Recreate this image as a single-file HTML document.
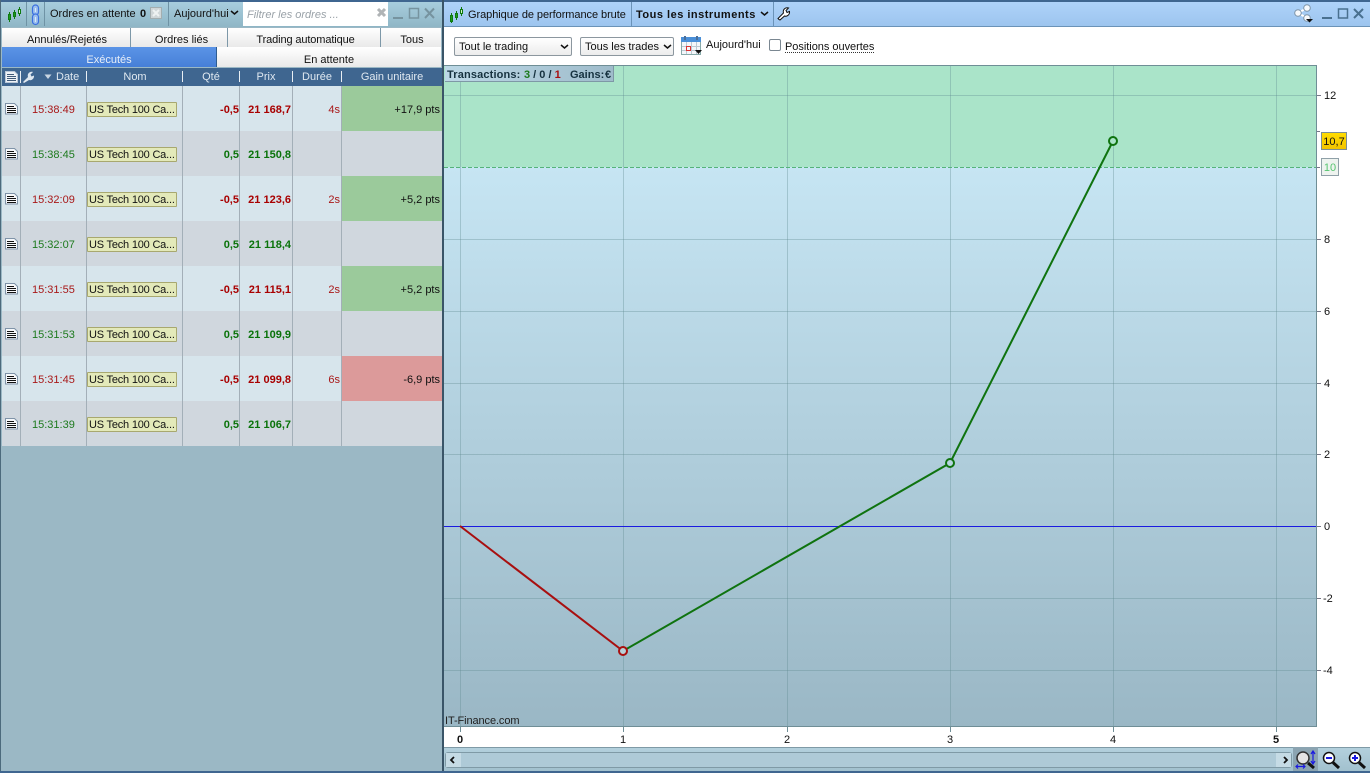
<!DOCTYPE html>
<html><head><meta charset="utf-8">
<style>
html,body{margin:0;padding:0}
body{width:1370px;height:773px;position:relative;overflow:hidden;background:#9bb8c5;font-family:"Liberation Sans",sans-serif;font-size:11px;color:#111}
.a{position:absolute;white-space:nowrap}
.box{position:absolute}
.tab{position:absolute;height:19px;line-height:24px;text-align:center;background:linear-gradient(#fff,#e9e9e9);font-size:11px;color:#111;border-right:1px solid #7d98a8;box-sizing:border-box}
.hd{position:absolute;top:68px;height:18px;line-height:19px;color:#dfe8f0;text-align:center;font-size:11px}
.sep{position:absolute;top:71px;width:1px;height:11px;background:#e8eef3}
.t{position:absolute;line-height:14px;height:14px;white-space:nowrap;margin-top:1px}
.tag{position:absolute;left:87px;width:87px;height:13px;line-height:14px;background:#e3e9b9;border:1px solid #a8a86f;border-radius:1px;font-size:11px;color:#111;padding-left:1px;white-space:nowrap;overflow:hidden;letter-spacing:-.2px}
.r{color:#a81818}.g{color:#1d7a1d}
.R{color:#a80000;font-weight:bold}.G{color:#0a730a;font-weight:bold}
.yl{position:absolute;left:1324px;font-size:11px;line-height:12px;color:#111;margin-top:1px}
.xl{position:absolute;top:734px;font-size:11px;line-height:13px;color:#111}
</style></head>
<body>
<!-- LEFT TOP BAR -->
<div class="box" style="left:0;top:0;width:442px;height:27px;background:linear-gradient(#a9cfdf,#8fb6c6)"></div>
<div class="box" style="left:0;top:0;width:444px;height:2px;background:#3f6690"></div>
<div class="box" style="left:26px;top:2px;width:1px;height:24px;background:#6f93a5"></div>
<div class="box" style="left:44px;top:2px;width:1px;height:24px;background:#6f93a5"></div>
<div class="box" style="left:168px;top:2px;width:1px;height:24px;background:#6f93a5"></div>
<svg class="box" style="left:0;top:0" width="46" height="27">
<g stroke="#0f7a0f" fill="#1d9a1d"><path d="M9.500 12v10M14.500 10v9M19.500 7v9"/><rect x="8.500" y="14.500" width="2" height="5"/><rect x="13.500" y="12.500" width="2" height="4"/></g>
<rect x="18.500" y="9.500" width="2" height="4" fill="#d8f0c8" stroke="#0f7a0f"/>
<g fill="#9cc0ee" stroke="#3a6fe0" stroke-width="1.200"><rect x="32.500" y="5" width="6" height="10" rx="3"/><rect x="32.500" y="14" width="6" height="10.500" rx="3"/></g>
<g fill="none" stroke="#dbe8f8" stroke-width="1"><path d="M35.500 8v4M35.500 17v5"/></g>
</svg>
<div class="a" style="left:50px;top:7px;line-height:14px;font-size:11px">Ordres en attente</div>
<div class="a" style="left:140px;top:7px;line-height:14px;font-size:11px;font-weight:bold">0</div>
<svg class="box" style="left:150px;top:7px" width="12" height="12"><rect x=".5" y=".5" width="11" height="11" fill="#cfd6d8" stroke="#a3aeb0"/><path d="M3 3l6 6M9 3l-6 6" stroke="#eef2f2" stroke-width="2"/></svg>
<div class="a" style="left:174px;top:7px;line-height:14px;font-size:11px">Aujourd'hui</div>
<svg class="box" style="left:230px;top:10px" width="9" height="6"><path d="M1 1l3.500 3L8 1" fill="none" stroke="#111" stroke-width="1.500"/></svg>
<div class="box" style="left:243px;top:2px;width:145px;height:24px;background:#fff"></div>
<div class="a" style="left:247px;top:8px;line-height:14px;font-size:11px;font-style:italic;color:#9aa2a8">Filtrer les ordres ...</div>
<svg class="box" style="left:376px;top:7px" width="12" height="12"><path d="M2 2l7 7M9 2l-7 7" stroke="#b0b4b6" stroke-width="3"/></svg>
<svg class="box" style="left:389px;top:5px" width="50" height="18">
<path d="M4 13h10" stroke="#76939f" stroke-width="2"/>
<rect x="20.500" y="3.500" width="9" height="9.500" fill="none" stroke="#76939f" stroke-width="1.500"/>
<path d="M36 3.500l9 9.500M45 3.500l-9 9.500" stroke="#76939f" stroke-width="2"/>
</svg>
<!-- TABS -->
<div class="box" style="left:0;top:27px;width:442px;height:41px;background:#9bb8c5"></div>
<div class="tab" style="left:2px;top:28px;width:129px;padding-left:2px">Annulés/Rejetés</div>
<div class="tab" style="left:131px;top:28px;width:97px;padding-left:5px">Ordres liés</div>
<div class="tab" style="left:228px;top:28px;width:153px;padding-left:3px;letter-spacing:-.12px">Trading automatique</div>
<div class="tab" style="left:381px;top:28px;width:60px;border-right:0;padding-left:2px">Tous</div>
<div class="tab" style="left:2px;top:47px;width:214px;height:20px;line-height:26px;background:linear-gradient(#5b94e6,#467fd8);color:#e8eff8;border:0">Exécutés</div>
<div class="tab" style="left:216px;top:47px;width:225px;height:20px;line-height:26px;border:0;border-left:1px solid #2e5c90">En attente</div>
<!-- HEADER -->
<div class="box" style="left:2px;top:68px;width:440px;height:18px;background:#3f6690"></div>
<svg class="box" style="left:4px;top:70px" width="32" height="14">
<path d="M1.500 1.500h9l3 3v8h-12z" fill="#eef2f6" stroke="#b9c8d8"/><path d="M3 4.500h7M3 6.500h9M3 8.500h9M3 10.500h9" stroke="#3f5a78"/>
<path d="M16.500 1v12" stroke="#e8eef3"/>
<path d="M20 13l-1-1 5-5c-1-3 1.500-6 5-5l-2.500 2.500 1 2 2.500-1c.5 3-2.500 5.500-5 4.500z" fill="#dfe8f0"/>
</svg>
<svg class="box" style="left:44px;top:74px" width="9" height="6"><path d="M0.500 0.500h7l-3.500 4.500z" fill="#c9d6e2"/></svg>
<div class="hd" style="left:56px;width:22px">Date</div>
<div class="hd" style="left:87px;width:96px">Nom</div>
<div class="hd" style="left:183px;width:56px">Qté</div>
<div class="hd" style="left:240px;width:52px">Prix</div>
<div class="hd" style="left:293px;width:48px">Durée</div>
<div class="hd" style="left:342px;width:100px">Gain unitaire</div>
<div class="sep" style="left:86px"></div><div class="sep" style="left:182px"></div><div class="sep" style="left:239px"></div><div class="sep" style="left:292px"></div><div class="sep" style="left:341px"></div>
<!-- ROWS BG -->
<div class="box" style="left:2px;top:86px;width:440px;height:45px;background:#d7e5ec"></div>
<div class="box" style="left:2px;top:131px;width:440px;height:45px;background:#d0d7de"></div>
<div class="box" style="left:2px;top:176px;width:440px;height:45px;background:#d7e5ec"></div>
<div class="box" style="left:2px;top:221px;width:440px;height:45px;background:#d0d7de"></div>
<div class="box" style="left:2px;top:266px;width:440px;height:45px;background:#d7e5ec"></div>
<div class="box" style="left:2px;top:311px;width:440px;height:45px;background:#d0d7de"></div>
<div class="box" style="left:2px;top:356px;width:440px;height:45px;background:#d7e5ec"></div>
<div class="box" style="left:2px;top:401px;width:440px;height:45px;background:#d0d7de"></div>
<div class="box" style="left:342px;top:86px;width:100px;height:45px;background:#9bca9b"></div>
<div class="box" style="left:342px;top:176px;width:100px;height:45px;background:#9bca9b"></div>
<div class="box" style="left:342px;top:266px;width:100px;height:45px;background:#9bca9b"></div>
<div class="box" style="left:342px;top:356px;width:100px;height:45px;background:#dc9a9a"></div>
<div class="box" style="left:20px;top:86px;width:1px;height:360px;background:#a3afb8"></div>
<div class="box" style="left:86px;top:86px;width:1px;height:360px;background:#a3afb8"></div>
<div class="box" style="left:182px;top:86px;width:1px;height:360px;background:#a3afb8"></div>
<div class="box" style="left:239px;top:86px;width:1px;height:360px;background:#a3afb8"></div>
<div class="box" style="left:292px;top:86px;width:1px;height:360px;background:#a3afb8"></div>
<div class="box" style="left:341px;top:86px;width:1px;height:360px;background:#a3afb8"></div>
<!-- ROW CONTENT -->
<svg class="box" style="left:0;top:86px" width="20" height="360">
<defs><g id="d"><path d="M5.500 17.500h9l3 3v7.500h-12z" fill="#f7f9fb" stroke="#7f93a8"/><path d="M7 20.500h7M7 22.500h9M7 24.500h9M7 26.500h9" stroke="#111"/></g></defs>
<use href="#d"/><use href="#d" y="45"/><use href="#d" y="90"/><use href="#d" y="135"/><use href="#d" y="180"/><use href="#d" y="225"/><use href="#d" y="270"/><use href="#d" y="315"/>
</svg>

<div class="t r" style="left:32px;top:102px">15:38:49</div><div class="tag" style="top:102px">US Tech 100 Ca...</div><div class="t R" style="right:1131px;top:102px">-0,5</div><div class="t R" style="right:1079px;top:102px">21 168,7</div><div class="t r" style="right:1030px;top:102px">4s</div><div class="t" style="right:930px;top:102px">+17,9 pts</div>

<div class="t g" style="left:32px;top:147px">15:38:45</div><div class="tag" style="top:147px">US Tech 100 Ca...</div><div class="t G" style="right:1131px;top:147px">0,5</div><div class="t G" style="right:1079px;top:147px">21 150,8</div>

<div class="t r" style="left:32px;top:192px">15:32:09</div><div class="tag" style="top:192px">US Tech 100 Ca...</div><div class="t R" style="right:1131px;top:192px">-0,5</div><div class="t R" style="right:1079px;top:192px">21 123,6</div><div class="t r" style="right:1030px;top:192px">2s</div><div class="t" style="right:930px;top:192px">+5,2 pts</div>

<div class="t g" style="left:32px;top:237px">15:32:07</div><div class="tag" style="top:237px">US Tech 100 Ca...</div><div class="t G" style="right:1131px;top:237px">0,5</div><div class="t G" style="right:1079px;top:237px">21 118,4</div>

<div class="t r" style="left:32px;top:282px">15:31:55</div><div class="tag" style="top:282px">US Tech 100 Ca...</div><div class="t R" style="right:1131px;top:282px">-0,5</div><div class="t R" style="right:1079px;top:282px">21 115,1</div><div class="t r" style="right:1030px;top:282px">2s</div><div class="t" style="right:930px;top:282px">+5,2 pts</div>

<div class="t g" style="left:32px;top:327px">15:31:53</div><div class="tag" style="top:327px">US Tech 100 Ca...</div><div class="t G" style="right:1131px;top:327px">0,5</div><div class="t G" style="right:1079px;top:327px">21 109,9</div>

<div class="t r" style="left:32px;top:372px">15:31:45</div><div class="tag" style="top:372px">US Tech 100 Ca...</div><div class="t R" style="right:1131px;top:372px">-0,5</div><div class="t R" style="right:1079px;top:372px">21 099,8</div><div class="t r" style="right:1030px;top:372px">6s</div><div class="t" style="right:930px;top:372px">-6,9 pts</div>

<div class="t g" style="left:32px;top:417px">15:31:39</div><div class="tag" style="top:417px">US Tech 100 Ca...</div><div class="t G" style="right:1131px;top:417px">0,5</div><div class="t G" style="right:1079px;top:417px">21 106,7</div>

<!-- borders -->
<div class="box" style="left:0;top:0;width:1px;height:773px;background:#4c6a7c"></div>
<div class="box" style="left:442px;top:0;width:2px;height:773px;background:#3a5568"></div>
<div class="box" style="left:0;top:771px;width:1370px;height:2px;background:#3f6690"></div>

<!-- RIGHT TOP BAR -->
<div class="box" style="left:444px;top:0;width:926px;height:27px;background:linear-gradient(#b0d4fa,#9cc4ee)"></div>
<div class="box" style="left:444px;top:0;width:926px;height:2px;background:#3f6690"></div>
<div class="box" style="left:444px;top:26px;width:926px;height:1px;background:#6b93b8"></div>
<div class="box" style="left:631px;top:2px;width:1px;height:24px;background:#6b93b8"></div>
<div class="box" style="left:773px;top:2px;width:1px;height:24px;background:#6b93b8"></div>
<svg class="box" style="left:448px;top:3px" width="24" height="22">
<g stroke="#0f7a0f" fill="#1d9a1d"><path d="M3.500 10v10M8.500 8v9M13.500 4v9"/><rect x="2.500" y="12.500" width="2" height="6"/><rect x="7.500" y="10.500" width="2" height="4"/></g>
<rect x="12.500" y="6.500" width="2" height="4" fill="#d8f0c8" stroke="#0f7a0f"/>
</svg>
<div class="a" style="left:468px;top:8px;line-height:14px;font-size:11px;letter-spacing:-.06px">Graphique de performance brute</div>
<div class="a" style="left:636px;top:8px;line-height:14px;font-size:11px;font-weight:bold;letter-spacing:.5px">Tous les instruments</div>
<svg class="box" style="left:760px;top:11px" width="9" height="6"><path d="M1 1l3.500 3L8 1" fill="none" stroke="#111" stroke-width="1.500"/></svg>
<svg class="box" style="left:777px;top:6px" width="14" height="15"><path d="M2 13.500l-1-1 5.500-5.500c-1-3 1.500-6 5-5l-2.500 2.500 1 2 2.500-1c.5 3-2.500 5.500-5 4.500l-4.500 4z" fill="#fff" stroke="#111"/></svg>
<svg class="box" style="left:1292px;top:4px" width="24" height="20">
<path d="M6 9l9-5M6 9l9 5" stroke="#fff" stroke-width="2"/>
<circle cx="6" cy="9" r="3.300" fill="#f6f9fc" stroke="#7f95a8"/><circle cx="15" cy="4" r="3.300" fill="#f6f9fc" stroke="#7f95a8"/><circle cx="15" cy="14" r="3.300" fill="#f6f9fc" stroke="#7f95a8"/>
<path d="M14 15h7l-3.500 3.500z" fill="#111"/>
</svg>
<svg class="box" style="left:1320px;top:5px" width="50" height="18">
<path d="M2 13h10" stroke="#49708f" stroke-width="2"/>
<rect x="18.500" y="4" width="9" height="9" fill="none" stroke="#49708f" stroke-width="1.500"/>
<path d="M34 4l9 9M43 4l-9 9" stroke="#49708f" stroke-width="2"/>
</svg>
<!-- OPTIONS BAR -->
<div class="box" style="left:444px;top:27px;width:926px;height:38px;background:#fff"></div>
<div class="box" style="left:454px;top:37px;width:118px;height:19px;box-sizing:border-box;border:1px solid #8c979f;border-radius:2px;background:linear-gradient(#fff,#ececec);line-height:19px;padding-left:4px;font-size:11px">Tout le trading</div>
<svg class="box" style="left:560px;top:44px" width="9" height="6"><path d="M1 1l3.500 3L8 1" fill="none" stroke="#111" stroke-width="1.500"/></svg>
<div class="box" style="left:580px;top:37px;width:94px;height:19px;box-sizing:border-box;border:1px solid #8c979f;border-radius:2px;background:linear-gradient(#fff,#ececec);line-height:19px;padding-left:4px;font-size:11px">Tous les trades</div>
<svg class="box" style="left:663px;top:44px" width="9" height="6"><path d="M1 1l3.500 3L8 1" fill="none" stroke="#111" stroke-width="1.500"/></svg>
<svg class="box" style="left:680px;top:34px" width="23" height="22">
<rect x="1.500" y="4.500" width="19" height="16" fill="#f4f7fa" stroke="#8aa"/><rect x="1" y="3" width="20" height="5" fill="#4a8fd8"/>
<path d="M5 2v4M17 2v4" stroke="#4a6f9a" stroke-width="2"/>
<path d="M2 12.500h18M2 16.500h18M6.500 8v12M11.500 8v12M16.500 8v12" stroke="#bcc8d2"/>
<rect x="6.500" y="12.500" width="4" height="4" fill="none" stroke="#d33"/>
<path d="M15 16h7l-3.500 4z" fill="#111"/>
</svg>
<div class="a" style="left:706px;top:38px;line-height:14px;font-size:11px">Aujourd'hui</div>
<div class="box" style="left:769px;top:39px;width:12px;height:12px;box-sizing:border-box;border:1px solid #7a8791;border-radius:2px;background:#fff"></div>
<div class="a" style="left:785px;top:40px;line-height:14px;font-size:11px;border-bottom:1px dotted #333;height:12px;letter-spacing:-.03px">Positions ouvertes</div>

<!-- CHART -->
<svg class="box" style="left:444px;top:65px" width="926" height="682" viewBox="444 65 926 682">
<defs><linearGradient id="bl" x1="0" y1="0" x2="0" y2="1"><stop offset="0" stop-color="#c6e5f3"/><stop offset="1" stop-color="#9ab7c5"/></linearGradient></defs>
<rect x="444" y="65" width="926" height="682" fill="#fff"/>
<rect x="444" y="65" width="873" height="102" fill="#aae4c9"/>
<rect x="444" y="167" width="873" height="560" fill="url(#bl)"/>
<g stroke="#5f8a8f" stroke-opacity=".35" stroke-width="1">
<path d="M444 95.500h873M444 239.500h873M444 311.500h873M444 383.500h873M444 454.500h873M444 598.500h873M444 670.500h873"/>
<path d="M460.500 65v662M623.500 65v662M787.500 65v662M950.500 65v662M1113.500 65v662M1276.500 65v662"/>
</g>
<path d="M444 167.500h873" stroke="#55b37a" stroke-dasharray="4 2"/>
<path d="M444 526.500h873" stroke="#1a1ae0"/>
<path d="M1316.500 65v662M444 726.500h873M444 65.500h873" stroke="#6f8e96" fill="none"/>
<path d="M1317 95.500h4M1317 131.500h3M1317 167.500h3M1317 239.500h4M1317 311.500h4M1317 383.500h4M1317 454.500h4M1317 526.500h4M1317 598.500h4M1317 670.500h4" stroke="#778"/>
<path d="M460.500 727v5M623.500 727v5M787.500 727v5M950.500 727v5M1113.500 727v5M1276.500 727v5" stroke="#6f8e96"/>
<path d="M460 526L623 651" stroke="#a80f0f" stroke-width="2" fill="none"/>
<path d="M623 651L950 463L1113 141" stroke="#0f730f" stroke-width="2" fill="none"/>
<circle cx="623" cy="651" r="4" fill="#b7d0d8" stroke="#a80f0f" stroke-width="2"/>
<circle cx="950" cy="463" r="4" fill="#b7d5e0" stroke="#0f730f" stroke-width="2"/>
<circle cx="1113" cy="141" r="4" fill="#aae4c9" stroke="#0f730f" stroke-width="2"/>
</svg>
<!-- info box -->
<div class="box" style="left:445px;top:66px;width:169px;height:16px;background:linear-gradient(90deg,#bcd8e6,#9fbccb);border:1px solid #7e98a6;border-top:0;border-left:0;box-sizing:border-box"></div>
<div class="a" style="left:447px;top:68px;line-height:14px;font-size:11px;font-weight:bold;color:#16323f;letter-spacing:.15px">Transactions:</div>
<div class="a" style="left:524px;top:68px;line-height:14px;font-size:11px;font-weight:bold"><span style="color:#1d7a1d">3</span><span style="color:#16323f"> / 0 / </span><span style="color:#a80f0f">1</span></div>
<div class="a" style="left:570px;top:68px;line-height:14px;font-size:11px;font-weight:bold;color:#16323f">Gains:</div>
<div class="a" style="left:605px;top:68px;line-height:14px;font-size:11px;font-weight:bold;color:#16323f">€</div>
<!-- y labels -->
<div class="yl" style="top:89px">12</div>
<div class="yl" style="top:233px">8</div>
<div class="yl" style="top:305px">6</div>
<div class="yl" style="top:377px">4</div>
<div class="yl" style="top:448px">2</div>
<div class="yl" style="top:520px">0</div>
<div class="yl" style="top:592px;left:1323px">-2</div>
<div class="yl" style="top:664px;left:1323px">-4</div>
<div class="box" style="left:1321px;top:132px;width:26px;height:18px;box-sizing:border-box;border:1px solid #7c8e96;background:linear-gradient(#ffdc00,#f2c400);line-height:18px;text-align:center;font-size:11px">10,7</div>
<div class="box" style="left:1321px;top:158px;width:18px;height:18px;box-sizing:border-box;border:1px solid #8fa0a8;background:#eef3ef;line-height:18px;text-align:center;font-size:11px;color:#55c56f">10</div>
<div class="a" style="left:445px;top:714px;line-height:14px;font-size:11px;color:#222;letter-spacing:-.1px">IT-Finance.com</div>
<!-- x labels -->
<div class="xl" style="left:457px;font-weight:bold">0</div>
<div class="xl" style="left:620px">1</div>
<div class="xl" style="left:784px">2</div>
<div class="xl" style="left:947px">3</div>
<div class="xl" style="left:1110px">4</div>
<div class="xl" style="left:1273px;font-weight:bold">5</div>
<!-- bottom scrollbar -->
<div class="box" style="left:444px;top:747px;width:926px;height:24px;background:linear-gradient(#b3d0dd,#a2c1ce);border-top:1px solid #7f9aa6;box-sizing:border-box"></div>
<div class="box" style="left:445px;top:752px;width:847px;height:16px;box-sizing:border-box;border:1px solid #7f9aa6;border-radius:3px;background:#aecad7"></div>
<div class="box" style="left:446px;top:753px;width:15px;height:14px;background:#c5dbe5"></div>
<div class="box" style="left:1276px;top:753px;width:15px;height:14px;background:#c5dbe5"></div>
<svg class="box" style="left:449px;top:756px" width="8" height="8"><path d="M5 1L2 4l3 3" fill="none" stroke="#111" stroke-width="1.800"/></svg>
<svg class="box" style="left:1281px;top:756px" width="8" height="8"><path d="M3 1l3 3-3 3" fill="none" stroke="#111" stroke-width="1.800"/></svg>
<div class="box" style="left:1293px;top:747px;width:25px;height:24px;background:#8ba4b1"></div>
<svg class="box" style="left:1294px;top:748px" width="76" height="23">
<circle cx="9" cy="10" r="6" fill="#e4e4e4" stroke="#333" stroke-width="1.500"/>
<path d="M14 15l6 5" stroke="#111" stroke-width="3"/>
<path d="M19 4v11M17 6l2-3 2 3M17 13l2 3 2-3" stroke="#1a1ae0" fill="none" stroke-width="1.200"/>
<path d="M2 18.500h9M4 16.500l-2 2 2 2M9 16.500l2 2-2 2" stroke="#1a1ae0" fill="none" stroke-width="1.200"/>
<circle cx="35" cy="10" r="5.500" fill="#fff" stroke="#111" stroke-width="1.500"/>
<path d="M32 10h6" stroke="#1a1ae0" stroke-width="2"/>
<path d="M39 14.500l6 5.500" stroke="#111" stroke-width="3"/>
<circle cx="61" cy="10" r="5.500" fill="#fff" stroke="#111" stroke-width="1.500"/>
<path d="M58 10h6M61 7v6" stroke="#1a1ae0" stroke-width="2"/>
<path d="M65 14.500l6 5.500" stroke="#111" stroke-width="3"/>
</svg>
</body></html>
